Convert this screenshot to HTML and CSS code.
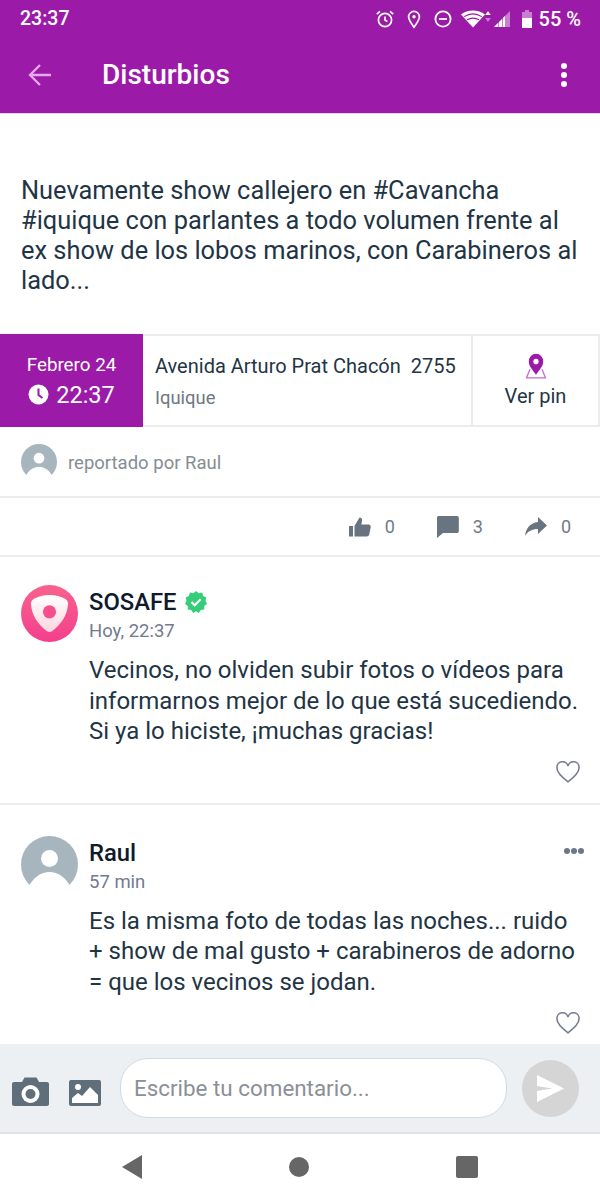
FILE: index.html
```html
<!DOCTYPE html>
<html lang="es">
<head>
  <meta charset="UTF-8" />
  <meta name="viewport" content="width=device-width, initial-scale=1.0"/>
  <title>Disturbios</title>
  <link rel="stylesheet" href="styles.css">
</head>
<body>
  <header class="app-header">
    <div class="status-bar">
      <span class="status-time">23:37</span>
      <div class="status-icons">
        <svg class="st-alarm" width="20" height="20" viewBox="0 0 20 20" fill="none" stroke="#fff" stroke-width="1.7"><circle cx="10" cy="11" r="6.6"/><path d="M10 7.5V11l2.4 1.6M1.8 5.2 5 2.4M18.2 5.2 15 2.4"/></svg>
        <svg class="st-loc" width="16" height="20" viewBox="0 0 16 20" fill="none" stroke="#fff" stroke-width="1.7"><path d="M8 18.2C5 14.2 2.6 11 2.6 7.8a5.4 5.4 0 0 1 10.8 0c0 3.2-2.4 6.4-5.4 10.4Z"/><circle cx="8" cy="7.8" r="1.7" fill="#fff" stroke="none"/></svg>
        <svg class="st-dnd" width="20" height="20" viewBox="0 0 20 20" fill="none" stroke="#fff" stroke-width="1.8"><circle cx="10" cy="10" r="7.6"/><path d="M6 10h8"/></svg>
        <svg class="st-wifi" width="30" height="20" viewBox="0 0 30 20"><path d="M0 5.5C6.5.2 17.500.2 24 5.500L12 18.500Z" fill="#fff"/><path d="M3.200 7.600c5.500-3.400 12-3.400 17.600 0M6 10.700c3.800-2 8.200-2 12 0" stroke="#9c1aa8" stroke-width="1.100" fill="none"/><path d="m27 2 2.800 4h-5.600Z" fill="#fff"/><path d="m27 13-2.800-4h5.600Z" fill="#c77fd0"/></svg>
        <svg class="st-signal" width="18" height="20" viewBox="0 0 18 20"><path d="M1 18 17 2v16Z" fill="#c77fd0"/><path d="M1 18 5 14v4ZM6 18v-5l3-3v8ZM10 18V9l2-2v11Z" fill="#fff"/></svg>
        <svg class="st-batt" width="12" height="20" viewBox="0 0 12 20"><path d="M4 1h4v2h3v16H1V3h3Z" fill="#c77fd0"/><path d="M1 9h10v10H1Z" fill="#fff"/></svg>
        <span class="status-pct">55 %</span>
      </div>
    </div>
    <div class="toolbar">
      <svg class="back-icon" width="24" height="24" viewBox="0 0 24 24" fill="none" stroke="#e6a9ec" stroke-width="2.300"><path d="M23 12H2M12 2 2 12l10 10"/></svg>
      <h1>Disturbios</h1>
      <div class="more-dots"><i></i><i></i><i></i></div>
    </div>
  </header>

  <main class="content">
    <p class="post-text">Nuevamente show callejero en #Cavancha #iquique con parlantes a todo volumen frente al ex show de los lobos marinos, con Carabineros al lado...</p>

    <div class="info-row">
      <div class="info-date">
        <span class="date-day">Febrero 24</span>
        <span class="date-time">
          <svg width="21" height="21" viewBox="0 0 21 21"><circle cx="10.500" cy="10.500" r="10" fill="#fff"/><path d="M10.500 4.500v6.500l4 3" fill="none" stroke="#9c1aa8" stroke-width="2"/></svg>
          22:37
        </span>
      </div>
      <div class="info-address">
        <span class="addr-main">Avenida Arturo Prat Chacón&nbsp; 2755</span>
        <span class="addr-city">Iquique</span>
      </div>
      <div class="info-pin">
        <svg width="22" height="26" viewBox="0 0 22 24" preserveAspectRatio="none"><path d="M5 15 1.500 23h19L17 15" fill="none" stroke="#c46fd0" stroke-width="1.300"/><path d="M11 20C7 15 3.800 12 3.800 7.800a7.200 7.200 0 0 1 14.400 0C18.200 12 15 15 11 20Z" fill="#9c1aa8"/><circle cx="11" cy="7.800" r="2.600" fill="#fff"/></svg>
        <span>Ver pin</span>
      </div>
    </div>

    <div class="reporter">
      <svg class="avatar-small" viewBox="0 0 57 57"><use href="#user-avatar"/></svg>
      <span>reportado por Raul</span>
    </div>

    <div class="stats">
      <div class="stat">
        <svg width="22" height="20" viewBox="0 0 22 20" fill="#68747f"><path d="M0 9h4v10.500H0ZM5.500 9 10.500.5c2 0 3 1.500 2.500 3.500l-.7 3.500h7.200c1.500 0 2.500 1.300 2.200 2.700l-1.500 7.300c-.3 1.300-1.300 2-2.500 2H5.500Z"/></svg>
        <span>0</span>
      </div>
      <div class="stat">
        <svg width="22" height="22" viewBox="0 0 22 22" fill="#68747f"><path d="M1.500 0h18.500c1 0 1.800.8 1.800 1.800v13.500c0 1-.8 1.800-1.800 1.800H6L0 22V1.500C0 .7.700 0 1.500 0Z"/></svg>
        <span>3</span>
      </div>
      <div class="stat">
        <svg width="22" height="20" viewBox="0 0 22 20" fill="#68747f"><path d="M13 0l9 8.500-9 8.500v-5C7 12 3 14 0 19c.8-7 4.500-13 13-14Z"/></svg>
        <span>0</span>
      </div>
    </div>

    <article class="comment">
      <svg class="avatar" viewBox="0 0 57 57">
        <defs>
          <linearGradient id="pink" x1="0" y1="0" x2="0" y2="1"><stop offset="0" stop-color="#f8628c"/><stop offset="1" stop-color="#f43f8e"/></linearGradient>
          <linearGradient id="shield" x1="0" y1="0" x2="0" y2="1"><stop offset="0" stop-color="#fff"/><stop offset="1" stop-color="#fbd6df"/></linearGradient>
        </defs>
        <circle cx="28.500" cy="28.500" r="28.500" fill="url(#pink)"/>
        <path d="M28.500 10c6 0 11.500 1.600 15.500 3.800 2 1.100 3.100 2.700 3 5-.5 11-6.500 20.500-16 27.400-1.500 1.100-3.500 1.100-5 0-9.500-6.900-15.500-16.400-16-27.400-.1-2.300 1-3.900 3-5 4-2.200 9.500-3.800 15.500-3.800Z" fill="url(#shield)"/>
        <circle cx="28.500" cy="26.800" r="6.600" fill="#f5508c"/>
      </svg>
      <div class="comment-body">
        <div class="comment-name">SOSAFE
          <svg class="verified" width="22" height="22" viewBox="0 0 22 22"><path d="m11 0 2.700 2.200 3.400-.6 1 3.400 3.200 1.400-.8 3.400L22 13l-2.800 2 .1 3.500-3.500.4L13.800 22 11 20.200 8.200 22l-1.900-3.100-3.500-.4.1-3.500L0 13l1.500-3.200-.8-3.400L3.900 5l1-3.400 3.400.6Z" fill="#35cd78"/><path d="m6.500 11 3.200 3.200 6-6" fill="none" stroke="#fff" stroke-width="2.200"/></svg>
        </div>
        <div class="comment-time">Hoy, 22:37</div>
        <p class="comment-text">Vecinos, no olviden subir fotos o vídeos para informarnos mejor de lo que está sucediendo. Si ya lo hiciste, ¡muchas gracias!</p>
        <div class="comment-like">
          <svg width="24" height="22" viewBox="0 0 24 22" fill="none" stroke="#767d8e" stroke-width="1.600"><path d="M12 20.800C5 15.500 1 11.500 1 7a5.600 5.600 0 0 1 11-2 5.600 5.600 0 0 1 11 2c0 4.500-4 8.500-11 13.800Z"/></svg>
        </div>
      </div>
    </article>

    <article class="comment comment-last">
      <svg class="avatar" viewBox="0 0 57 57"><use href="#user-avatar"/></svg>
      <div class="comment-body">
        <div class="comment-name">Raul</div>
        <div class="comment-time">57 min</div>
        <p class="comment-text">Es la misma foto de todas las noches... ruido + show de mal gusto + carabineros de adorno = que los vecinos se jodan.</p>
        <div class="comment-like">
          <svg width="24" height="22" viewBox="0 0 24 22" fill="none" stroke="#767d8e" stroke-width="1.600"><path d="M12 20.800C5 15.500 1 11.500 1 7a5.600 5.600 0 0 1 11-2 5.600 5.600 0 0 1 11 2c0 4.500-4 8.500-11 13.800Z"/></svg>
        </div>
      </div>
      <div class="comment-menu"><i></i><i></i><i></i></div>
    </article>
  </main>

  <footer class="input-bar">
    <svg width="37" height="29" viewBox="0 0 37 29"><path d="M2 5h8l2.500-4.500h12L27 5h8c1.100 0 2 .9 2 2v20c0 1.100-.9 2-2 2H2c-1.100 0-2-.9-2-2V7c0-1.100.9-2 2-2Z" fill="#5f6e7b"/><circle cx="18.500" cy="17" r="9" fill="#fff"/><circle cx="18.500" cy="17" r="5" fill="#5f6e7b"/></svg>
    <svg class="gallery" width="32" height="26" viewBox="0 0 32 26"><rect width="32" height="26" rx="2" fill="#5f6e7b"/><circle cx="9" cy="7" r="3" fill="#fff"/><path d="M3 23v-5l6-5 4 3 8-9 8 8v8Z" fill="#fff"/></svg>
    <div class="comment-input">Escribe tu comentario...</div>
    <div class="send-btn">
      <svg width="27" height="27" viewBox="0 0 27 27"><path d="M0 0 27 13.500 0 27V16l15-2.500L0 11Z" fill="#fff"/></svg>
    </div>
  </footer>

  <nav class="android-nav">
    <svg width="20" height="24" viewBox="0 0 20 24"><path d="M20 0v24L0 12Z" fill="#666"/></svg>
    <span class="nav-circle"></span>
    <span class="nav-square"></span>
  </nav>

  <svg class="svg-defs" width="0" height="0">
    <defs>
      <g id="user-avatar">
        <circle cx="28.500" cy="28.500" r="28.500" fill="#a7b5bf"/>
        <circle cx="28.500" cy="22.500" r="8.500" fill="#fff"/>
        <path d="M8 50C12 42 20 36 28.500 36S45 42 49 50V58H8Z" fill="#fff"/>
      </g>
    </defs>
  </svg>
</body>
</html>
```

FILE: styles.css
```css
* {
  box-sizing: border-box;
}
html, body {
  height: 100%;
}
body {
  margin: 0;
  height: 100vh;
  display: flex;
  flex-direction: column;
  overflow: hidden;
  background: white;
  font-family: Roboto, "Liberation Sans", sans-serif;
  color: #1f3545;
}
.svg-defs {
  display: none;
}

/* header */
.app-header {
  background: #9c1aa8;
  color: white;
  height: 114px;
  border-bottom: 1px solid #e6d3e9;
  flex-shrink: 0;
}
.status-bar {
  height: 37px;
  padding: 0 19px 0 20px;
  display: flex;
  align-items: center;
  justify-content: space-between;
}
.status-time {
  font-size: 19.500px;
  font-weight: 500;
}
.status-icons {
  display: flex;
  align-items: center;
}
.st-alarm { margin-right: 11px; }
.st-loc { margin-right: 11px; }
.st-dnd { margin-right: 8px; }
.st-wifi { margin-right: 2px; }
.st-signal { margin-right: 10px; }
.st-batt { margin-right: 6px; }
.status-pct {
  font-size: 20px;
  font-weight: 500;
}
.toolbar {
  height: 76px;
  padding: 0 33px 0 28px;
  display: flex;
  align-items: center;
}
.toolbar h1 {
  margin: 0 0 0 50px;
  padding-bottom: 2px;
  font-size: 28px;
  font-weight: 500;
  flex: 1;
}
.more-dots {
  display: flex;
  flex-direction: column;
  gap: 3px;
}
.more-dots i {
  width: 6px;
  height: 6px;
  border-radius: 50%;
  background: white;
}

/* post */
.content {
  flex: 1;
  overflow: hidden;
}
.post-text {
  margin: 0;
  padding: 61px 20px 39px 21px;
  font-size: 25.400px;
  line-height: 30px;
  color: #1f3545;
}
.info-row {
  display: flex;
  height: 93px;
  border-top: 2px solid #ececec;
  border-bottom: 2px solid #ececec;
}
.info-date {
  width: 143px;
  margin: -2px 0;
  padding-top: 1px;
  background: #9c1aa8;
  color: white;
  display: flex;
  flex-direction: column;
  align-items: center;
  justify-content: center;
  gap: 5px;
}
.date-day {
  font-size: 18.800px;
}
.date-time {
  display: flex;
  align-items: center;
  gap: 7px;
  font-size: 23.500px;
}
.info-address {
  flex: 1;
  padding-left: 12px;
  display: flex;
  flex-direction: column;
  justify-content: center;
  gap: 9px;
}
.addr-main {
  font-size: 20px;
}
.addr-city {
  font-size: 18.400px;
  color: #6f7780;
}
.info-pin {
  width: 129px;
  border-left: 2px solid #ececec;
  border-right: 2px solid #ececec;
  display: flex;
  flex-direction: column;
  align-items: center;
  justify-content: center;
  gap: 5px;
  font-size: 20px;
}
.reporter {
  height: 71px;
  padding-left: 21px;
  display: flex;
  align-items: center;
  gap: 11px;
  font-size: 18.500px;
  color: #858d94;
  border-bottom: 2px solid #ececec;
}
.reporter span {
  padding-top: 2px;
}
.avatar-small {
  width: 36px;
  height: 36px;
}
.stats {
  height: 59px;
  padding-right: 29px;
  display: flex;
  align-items: center;
  justify-content: flex-end;
  gap: 42px;
  border-bottom: 2px solid #ececec;
}
.stat {
  display: flex;
  align-items: center;
  gap: 14px;
  font-size: 18px;
  color: #727b84;
}

/* comments */
.comment {
  position: relative;
  padding: 28px 20px 20px 21px;
  display: flex;
  gap: 11px;
  border-bottom: 2px solid #ececec;
}
.comment-last {
  padding-top: 31px;
  border-bottom: none;
}
.avatar {
  width: 57px;
  height: 57px;
  flex-shrink: 0;
}
.comment-body {
  flex: 1;
}
.comment-name {
  display: flex;
  align-items: center;
  gap: 8px;
  font-size: 23.800px;
  font-weight: 500;
  line-height: 34px;
  color: #0f1a2b;
}
.comment-time {
  font-size: 18.500px;
  line-height: 24px;
  color: #737b8e;
}
.comment-text {
  margin: 12px 0 0;
  font-size: 24px;
  line-height: 30.500px;
  color: #1f3545;
}
.comment-like {
  display: flex;
  justify-content: flex-end;
  padding: 14px 0 0;
  height: 36px;
}
.comment-last .comment-like {
  padding-top: 15px;
}
.comment-menu {
  position: absolute;
  top: 43px;
  right: 16px;
  display: flex;
  gap: 1px;
}
.comment-menu i {
  width: 6px;
  height: 6px;
  border-radius: 50%;
  background: #6e7689;
}

/* input */
.input-bar {
  height: 90px;
  flex-shrink: 0;
  padding: 0 21px 0 12px;
  background: #ecf0f3;
  border-bottom: 2px solid #dfe2e4;
  display: flex;
  align-items: center;
}
.gallery {
  margin-left: 20px;
  margin-top: 2px;
}
.input-bar > svg {
  align-self: flex-end;
  margin-bottom: 26px;
}
.comment-input {
  width: 387px;
  height: 60px;
  margin: 0 15px 0 19px;
  padding-left: 13px;
  background: white;
  border: 1.500px solid #cfdbe4;
  border-radius: 28px;
  display: flex;
  align-items: center;
  font-size: 22.400px;
  color: #8a9096;
}
.send-btn {
  width: 57px;
  height: 57px;
  border-radius: 50%;
  background: #d5d5d5;
  display: flex;
  align-items: center;
  justify-content: center;
}
.android-nav {
  height: 66px;
  flex-shrink: 0;
  background: white;
  padding: 0 122px;
  display: flex;
  align-items: center;
  justify-content: space-between;
}
.nav-circle {
  width: 20px;
  height: 20px;
  border-radius: 50%;
  background: #666;
}
.nav-square {
  width: 22px;
  height: 22px;
  border-radius: 2px;
  background: #666;
}
```
